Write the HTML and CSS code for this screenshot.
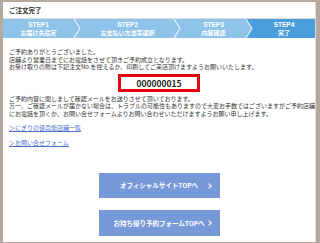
FILE: index.html
```html
<html lang="ja">
<head>
    <meta charset="utf-8">
    <meta name="viewport" content="width=device-width, initial-scale=1">
    <title>ご注文完了</title>
    <link rel="stylesheet" href="styles.css">
</head>

<body>
<div class="page">
    <h1 class="title">ご注文完了</h1>
    <div class="steps">
        <div class="step step1"><strong>STEP1</strong><span>お届け先指定</span></div>
        <svg class="sep" width="7" height="19" viewBox="0 0 7 19">
            <polygon points="0,0 6,9.5 0,19" fill="#90c3ea"/>
            <polygon points="0,0 7,0 7,19 0,19 6,9.5" fill="#90c3ea"/>
            <polyline points="0,0 6,9.5 0,19" fill="none" stroke="#fff" stroke-width="1"/>
        </svg>
        <div class="step step2"><strong>STEP2</strong><span>お支払い方法等選択</span></div>
        <svg class="sep" width="7" height="19" viewBox="0 0 7 19">
            <polygon points="0,0 6,9.5 0,19" fill="#90c3ea"/>
            <polygon points="0,0 7,0 7,19 0,19 6,9.5" fill="#90c3ea"/>
            <polyline points="0,0 6,9.5 0,19" fill="none" stroke="#fff" stroke-width="1"/>
        </svg>
        <div class="step step3"><strong>STEP3</strong><span>内容確認</span></div>
        <svg class="sep" width="7" height="19" viewBox="0 0 7 19">
            <polygon points="0,0 6,9.5 0,19" fill="#90c3ea"/>
            <polygon points="0,0 7,0 7,19 0,19 6,9.5" fill="#4a9edc"/>
            <polyline points="0,0 6,9.5 0,19" fill="none" stroke="#fff" stroke-width="1"/>
        </svg>
        <div class="step step4 current"><strong>STEP4</strong><span>完了</span></div>
    </div>

    <div class="content">
        <p>ご予約ありがとうございました。<br>
            店舗より営業日までにお電話をさせて頂きご予約成立となります。<br>
            お受け取りの際は下記注文No.を控えるか、印刷してご来店頂けますようお願いいたします。</p>

        <div class="order-no">000000015</div>

        <p>ご予約内容に関しまして確認メールをお送りさせて頂いております。<br>
            万一、ご確認メールが届かない場合は、トラブルの可能性もありますので大変お手数ではございますがご予約店舗<br>
            にお電話を頂くか、お問い合せフォームよりお問い合わせいただけますようお願い申し上げます。</p>

        <ul class="links">
            <li><a href="#">＞にぎりの徳兵衛店舗一覧</a></li>
            <li><a href="#">＞お問い合せフォーム</a></li>
        </ul>

        <div class="buttons">
            <a class="btn" href="#">オフィシャルサイトTOPへ</a>
            <a class="btn tall" href="#">お持ち帰り予約フォームTOPへ</a>
        </div>
    </div>
</div>
</body>
</html>
```

FILE: styles.css
```css
* {
    margin: 0;
    padding: 0
}

body {
    background: #b3a99f;
    color: #333;
    font: normal 6px "Noto Sans CJK JP", "Liberation Sans", sans-serif;
}

.page {
    margin: 2px 4px 0 3px;
    height: 240px;
    background: #fff;
    border-right: 1px solid #ddd;
    overflow: hidden;
}

.title {
    height: 16px;
    line-height: 16px;
    padding-left: 6px;
    font-size: 6.5px;
    font-weight: bold;
    border-bottom: 1px solid #ddd;
}

.steps {
    display: flex;
    height: 19px;
}

.sep {
    display: block;
    flex: none;
}

.step {
    display: flex;
    flex-direction: column;
    justify-content: center;
    align-items: center;
    background: #90c3ea;
    color: #fff;
    font-weight: bold;
    line-height: 8px;
}

.step strong {
    font-size: 6.5px;
    font-family: "Liberation Sans", sans-serif;
}

.step1 { width: 71px; }
.step2 { width: 93px; }
.step3 { width: 65px; }
.step4 { width: 62px; }

.step.current {
    background: #4a9edc;
}

.content {
    padding: 10px 6px 0;
}

.content p {
    line-height: 7.5px;
    white-space: nowrap;
}

.order-no {
    width: 76px;
    height: 12px;
    margin: 3px auto 3px;
    border: 3px solid #e60012;
    text-align: center;
    line-height: 12px;
    font-size: 8.5px;
    font-weight: bold;
    color: #222;
}

.links {
    list-style: none;
    margin-top: 7px;
}

.links li {
    line-height: 8px;
    margin-bottom: 7px;
}

.links a {
    color: #4a6fcf;
    text-decoration: underline;
}

.buttons {
    display: flex;
    flex-direction: column;
    align-items: center;
    gap: 12px;
    margin-top: 26px;
}

.btn {
    position: relative;
    display: block;
    width: 121px;
    height: 25px;
    line-height: 25px;
    background: #7899d8;
    color: #fff;
    font-size: 6.5px;
    font-weight: bold;
    text-align: center;
    text-decoration: none;
}

.btn.tall {
    height: 26px;
    line-height: 26px;
}

.btn::after {
    content: "";
    position: absolute;
    right: 9px;
    top: calc(50% - 2px);
    width: 3px;
    height: 3px;
    border-top: 1px solid #fff;
    border-right: 1px solid #fff;
    transform: rotate(45deg);
}
```
